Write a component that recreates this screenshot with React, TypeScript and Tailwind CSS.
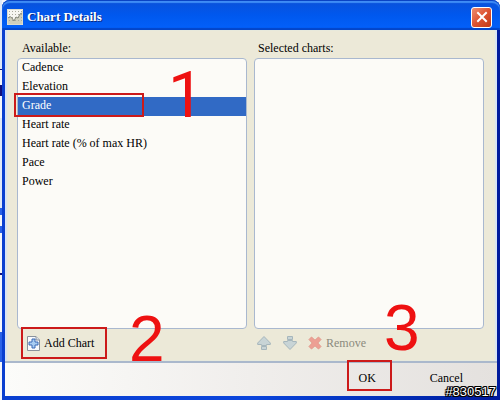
import React, { useState } from "react";

const charts = [
  "Cadence",
  "Elevation",
  "Grade",
  "Heart rate",
  "Heart rate (% of max HR)",
  "Pace",
  "Power",
];

export default function App() {
  const [selected, setSelected] = useState("Grade");

  return (
    <div className="flex min-h-screen bg-[#f4f6fb] font-['Liberation_Serif',serif] text-[12px] leading-4 text-black">
      <BackgroundEdge />
      <section className="relative flex flex-1 flex-col rounded-t-lg bg-gradient-to-r from-[#0a3fd0] via-[#0b45dc] to-[#001a9c]">
        <header className="flex h-[30px] items-center rounded-t-lg bg-gradient-to-b from-[#0a50d8] via-[#0058ee] to-[#0361fb] pt-1 pr-2 pl-[5px] shadow-[inset_0_1px_0_#0a43c4,inset_0_3px_1px_#3f8cf5,inset_0_-2px_1px_#0345c9]">
          <ChartIcon className="h-4 w-4" />
          <h1 className="ml-1 flex-1 text-[13px] font-bold text-white [text-shadow:1px_1px_0_#0a2a80]">
            Chart Details
          </h1>
          <button
            aria-label="Close"
            className="flex h-[21px] w-[21px] items-center justify-center rounded-[3px] border border-white bg-gradient-to-br from-[#ec8d70] via-[#dd5230] to-[#c23a14]"
          >
            <CloseIcon className="h-3 w-3" />
          </button>
        </header>

        <main className="mr-[3px] ml-[3px] flex flex-1 flex-col bg-[#ece9d8] shadow-[inset_2px_0_1px_#d8e4f6,inset_-2px_0_1px_#d8e4f6]">
          <div className="grid flex-1 grid-cols-2 gap-[7px] pr-[13px] pl-3">
            <div className="flex flex-col">
              <h2 className="px-[5px] pt-[10px] pb-[2px]">Available:</h2>
              <ul className="flex-1 rounded-[4px] border border-[#a9b8cf] bg-[#fcfbf7]">
                {charts.map((name) => (
                  <li key={name} className="relative">
                    <button
                      onClick={() => setSelected(name)}
                      className={
                        name === selected
                          ? "block h-[19px] w-full bg-[#316ac5] px-1 pb-1 text-left text-white"
                          : "block h-[19px] w-full px-1 pb-1 text-left"
                      }
                    >
                      {name}
                    </button>
                    {name === "Grade" && (
                      <>
                        <Frame className="-top-1 -left-1 h-6 w-[130px]" />
                        <Step className="-top-[33px] left-[150px] font-['Roboto',sans-serif]">
                          1
                        </Step>
                      </>
                    )}
                  </li>
                ))}
              </ul>
            </div>
            <div className="flex flex-col">
              <h2 className="px-1 pt-[10px] pb-[2px]">Selected charts:</h2>
              <ul className="flex-1 rounded-[4px] border border-[#a9b8cf] bg-[#fcfbf7]" />
            </div>
          </div>

          <div className="grid h-8 grid-cols-2 gap-[7px] pr-[13px] pl-3">
            <div className="relative flex items-center pb-1 pl-[9px]">
              <button className="flex items-center gap-1">
                <AddIcon className="h-4 w-[14px]" />
                Add Chart
              </button>
              <Frame className="-top-[2px] left-1 h-8 w-[86px]" />
              <Step className="-top-[22px] left-[112px] font-['Liberation_Sans',sans-serif]">
                2
              </Step>
            </div>
            <div className="relative flex items-center pb-1 pl-[3px] text-[#8b897d]">
              <button aria-label="Move up" disabled>
                <ArrowIcon className="h-4 w-[14px]" />
              </button>
              <button aria-label="Move down" disabled className="ml-3">
                <ArrowIcon className="h-4 w-[14px] rotate-180" />
              </button>
              <button disabled className="ml-[11px] flex items-center gap-1">
                <RemoveIcon className="h-[14px] w-[14px]" />
                Remove
              </button>
              <Step className="-top-[33px] left-[130px] font-['Liberation_Sans',sans-serif]">
                3
              </Step>
            </div>
          </div>
        </main>

        <footer className="mr-[3px] mb-1 ml-[3px] flex h-[35px] justify-end border-t-2 border-[#aab8cc] bg-gradient-to-r from-[#fcfcfa] via-[#f0eeec] to-[#e4e1de] pr-[34px]">
          <button className="relative w-[45px] pr-1 pb-1">
            OK
            <Frame className="-top-[3px] left-0 h-[31px] w-[45px]" />
          </button>
          <button className="ml-[38px] pb-1">Cancel</button>
        </footer>

        <span className="absolute right-1 bottom-0 font-['Liberation_Sans',sans-serif] text-[13px] leading-4 text-white [text-shadow:1px_0_0_#000,-1px_0_0_#000,0_1px_0_#000,0_-1px_0_#000,1px_1px_0_#000,-1px_-1px_0_#000,1px_-1px_0_#000,-1px_1px_0_#000]">
          #830517
        </span>
      </section>
    </div>
  );
}

function Frame({ className }: { className: string }) {
  return (
    <span
      className={`pointer-events-none absolute z-10 border-2 border-[#cc1a1a] ${className}`}
    />
  );
}

function Step({ className, children }: { className: string; children: React.ReactNode }) {
  return (
    <span
      className={`pointer-events-none absolute z-20 text-[64px] leading-[64px] text-[#ee1111] ${className}`}
    >
      {children}
    </span>
  );
}

// sliver of the window that lies behind the dialog
function BackgroundEdge() {
  return (
    <svg className="h-[400px] w-[2px]" viewBox="0 0 2 400" preserveAspectRatio="none">
      <path fill="#dfe8f8" d="M0 0h2v70H0zM0 118h2v90H0z" />
      <path fill="#10107c" d="M0 69h2v1H0zM0 85h2v11H0zM0 273h2v2H0z" />
      <path fill="#2a62e8" d="M0 208h2v7H0zM0 226h2v7H0zM0 332h2v30H0z" />
    </svg>
  );
}

function ChartIcon(props: React.SVGProps<SVGSVGElement>) {
  return (
    <svg {...props} viewBox="0 0 16 16" fill="none">
      <path d="M0 0h16v16H0z" fill="#f6f6f0" />
      <path d="M1 9l2-1 2 1 2 3 2-4 2 1 2-4 2-1v11H1z" fill="#cfcfbd" />
      <path
        d="M2 2.5h13M2 5.5h13M2 8.5h13M2 11.5h13"
        stroke="#a9aa9c"
        strokeDasharray="1 2"
      />
      <path d="M1 9l2-1.500L5 9l2 3 2-4 2 1 2-4 2-1" stroke="#85887a" />
      <path d="M.5 .5h15v15H.5z" stroke="#dcdccd" />
    </svg>
  );
}

function CloseIcon(props: React.SVGProps<SVGSVGElement>) {
  return (
    <svg {...props} viewBox="0 0 12 12" stroke="#fff" strokeWidth="2" strokeLinecap="square">
      <path d="M2 2l8 8M10 2l-8 8" />
    </svg>
  );
}

function AddIcon(props: React.SVGProps<SVGSVGElement>) {
  return (
    <svg {...props} viewBox="0 0 14 16">
      <path d="M1.500 1.500h8.500l3.500 3.500v10.500h-12z" fill="#fafbfd" stroke="#8a929c" />
      <path d="M10 1.500V5h3.500" fill="#dde2e8" stroke="#8a929c" />
      <path
        d="M6 4h3v3h3v3H9v3H6v-3H3V7h3z"
        fill="#a9cdf2"
        stroke="#3a68b4"
      />
    </svg>
  );
}

function ArrowIcon(props: React.SVGProps<SVGSVGElement>) {
  return (
    <svg {...props} viewBox="0 0 14 16" fill="#c8d4d6" stroke="#a6b6bc">
      <path d="M7 1.500L13.300 8v1.500H9.500v1h-5v-1H.7V8z" />
      <path d="M4.500 11.500h5v3h-5z" />
    </svg>
  );
}

function RemoveIcon(props: React.SVGProps<SVGSVGElement>) {
  return (
    <svg {...props} viewBox="0 0 14 14">
      <path
        d="M3.500 1L7 4.200 10.500 1 13 3.500 9.800 7 13 10.500 10.500 13 7 9.800 3.500 13 1 10.500 4.200 7 1 3.500z"
        fill="#ed9f94"
        stroke="#e29a8c"
      />
    </svg>
  );
}
